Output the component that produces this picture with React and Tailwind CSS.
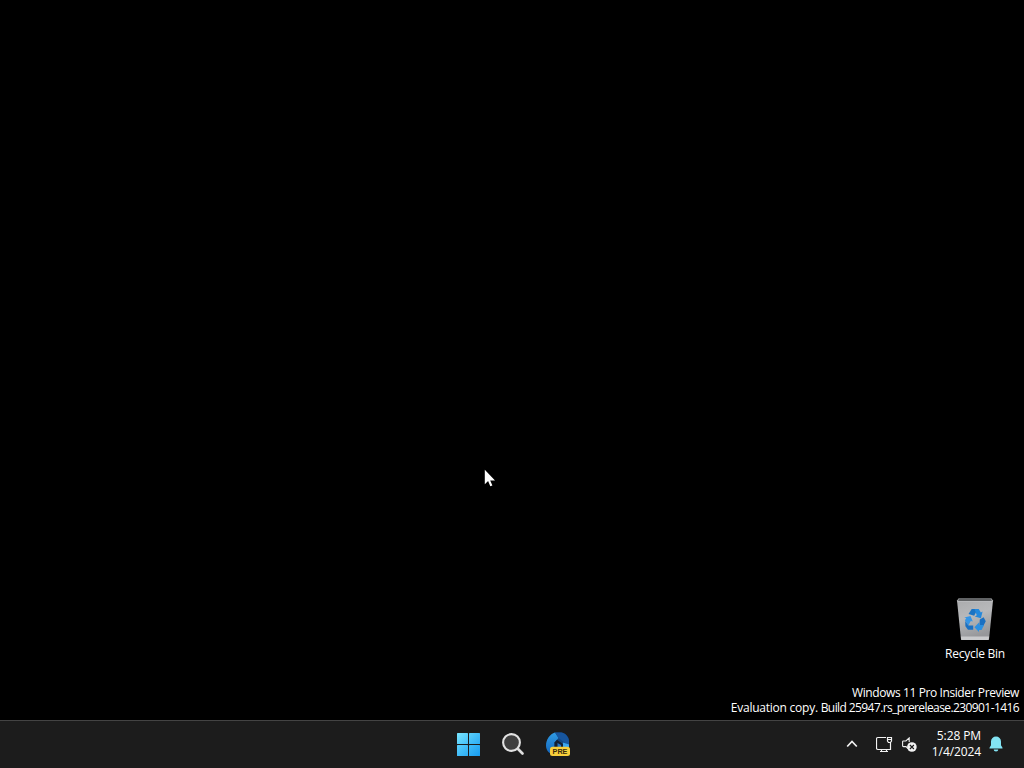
import React from 'react';

const RecycleBinIcon = () => (
  <svg width="38" height="44" viewBox="0 0 38 44">
    <defs>
      <linearGradient id="binBody" x1="0" y1="0" x2="0.3" y2="1">
        <stop offset="0" stopColor="#a9aaac" />
        <stop offset="0.5" stopColor="#b8b9bb" />
        <stop offset="1" stopColor="#96979a" />
      </linearGradient>
    </defs>
    <path d="M1 3.5 3 1h32l2 2.5-4 39H5z" fill="url(#binBody)" />
    <path d="M3.2 1h31.600L36 4.200H2z" fill="#606264" />
    <path d="M1.500 4.500h35" stroke="#c2c3c5" strokeWidth="0.800" />
    <path d="M4.9 39.500h28.200l-.4 3.500H5.2z" fill="#c9cacc" />
    <path d="m12.5 17 3.2-5h6l-3.5 6.8z" fill="#1b74c4" />
    <path d="M18.5 12h4.2l2.2 3.4 1.7-.8-1.7 6.6-6.1-1.8 2-1.2z" fill="#2388dc" />
    <path d="m8.3 20.4 6.2-1.4 2.3 5.6-2-.7-2.5 4.7-3.4-5.3 1.4-2z" fill="#3595e6" />
    <path d="m9.2 24 3.2 4.6h4.8v4.2H12l-2.6-3.6z" fill="#1a70c2" />
    <path d="m23.8 22.4 3.8-2.2 2.2 4-2.8 5.4-3.6-1.8z" fill="#1a70c2" />
    <path d="m18.4 30.2 4.6-4.6v2.3h5l-2.4 5H23v2z" fill="#2b90e2" />
  </svg>
);

const StartIcon = () => (
  <svg width="24" height="24" viewBox="0 0 24 24">
    <defs>
      <linearGradient id="startFill" gradientUnits="userSpaceOnUse" x1="0" y1="0" x2="24" y2="24">
        <stop offset="0" stopColor="#7be8ff" />
        <stop offset="0.5" stopColor="#42bdf8" />
        <stop offset="1" stopColor="#159af0" />
      </linearGradient>
    </defs>
    <g fill="url(#startFill)">
      <rect x="0" y="1" width="11" height="11" rx="0.5" />
      <rect x="12" y="1" width="11" height="11" rx="0.5" />
      <rect x="0" y="13" width="11" height="11" rx="0.5" />
      <rect x="12" y="13" width="11" height="11" rx="0.5" />
    </g>
  </svg>
);

const SearchIcon = () => (
  <svg width="24" height="24" viewBox="0 0 24 24" fill="none">
    <circle cx="10.500" cy="10.500" r="8.400" fill="#3f3f3f" stroke="#e2e2e2" strokeWidth="2.100" />
    <path d="m16.800 16.800 4.700 4.700" stroke="#dedede" strokeWidth="2.700" strokeLinecap="round" />
  </svg>
);

const DevHomeIcon = () => (
  <svg width="26" height="26" viewBox="0 0 26 26">
    <defs>
      <linearGradient id="ringLeft" x1="0" y1="0" x2="0" y2="1">
        <stop offset="0" stopColor="#2f9be4" />
        <stop offset="1" stopColor="#1467bd" />
      </linearGradient>
    </defs>
    <path d="M10 1.500h6.500c5 1 7.500 5 7.500 9V19l-4 4H8l-6-5V9z" fill="#124682" />
    <path d="M10 1.500 13.500 7 9.500 11.500V23H8c-4 0-7-4-7-8.500C1 8.500 5 3 10 1.500z" fill="url(#ringLeft)" />
    <path d="M10 1.500h6.500c4.500 1 7.500 5 7.500 9.500v4L13.500 7z" fill="#17559d" />
    <path d="m18 11.500 6 2V19h-7z" fill="#3aa5ee" />
    <path d="M9.500 11.500 12 8.800 18 13v4H9.500z" fill="#131f31" />
    <path d="m12.500 12 3.500 2v2h-3.500z" fill="#2475c8" />
    <rect x="5" y="15.800" width="20" height="9.200" rx="2.500" fill="#f8cf3b" />
    <text x="15" y="23.100" textAnchor="middle" fontFamily="Liberation Sans, sans-serif" fontWeight="700" fontSize="7.200" fill="#362b0b">PRE</text>
  </svg>
);

const ChevronIcon = () => (
  <svg width="12" height="8" viewBox="0 0 12 8" fill="none">
    <path d="m1.200 6.500 4.800-5 4.800 5" stroke="#f2f2f2" strokeWidth="1.700" />
  </svg>
);

const NetworkIcon = () => (
  <svg width="17" height="17" viewBox="0 0 17 17" fill="none" stroke="#f2f2f2" strokeWidth="1.200">
    <path d="M10 1.500H2q-1.500 0-1.500 1.500v9q0 1.500 1.500 1.500h12.500v-7" />
    <path d="M4 15.500h8M5.500 13.500v2M10.500 13.500v2" />
    <path d="M11.500 1.500h4v3.500l-1 1.500h-2l-1-1.500zM11.500 3.500h4" />
  </svg>
);

const VolumeIcon = () => (
  <svg width="16" height="15" viewBox="0 0 16 15" fill="none">
    <path d="M7.200 5V.9L3.900 4H1.300Q.6 4 .6 4.800v4q0 .8.8.8h2.600l2 2" stroke="#eeeeee" strokeWidth="1.100" />
    <circle cx="9.900" cy="10" r="4.800" fill="#f2f2f2" />
    <path d="m7.900 8 4 4m0-4-4 4" stroke="#1c1c1c" strokeWidth="1.100" />
  </svg>
);

const BellIcon = () => (
  <svg width="14" height="16" viewBox="0 0 14 16" fill="#83e3f3">
    <path d="M7 .5a5 5 0 0 0-5 5v3.700L.5 11.700q-.3.900.6.900h11.800q.9 0 .6-.9L12 9.200V5.500a5 5 0 0 0-5-5z" />
    <path d="M4.700 13.500h4.600a2.300 2 0 0 1-4.600 0z" />
  </svg>
);

const Cursor = () => (
  <svg className="absolute left-[484px] top-[469px]" width="12" height="19" viewBox="0 0 12 19">
    <path d="M.8.800v14.400l3.300-3.100 2.200 5.200 2.100-.9-2.200-5H11z" fill="#fff" />
  </svg>
);

const App = () => {
  return (
    <div className="relative flex h-screen w-full flex-col overflow-hidden bg-black font-['Open_Sans','Noto_Sans',sans-serif] text-[12px] text-white select-none">
      {/* Desktop */}
      <main className="flex flex-1 flex-col items-end justify-end">
        <div className="mr-[11px] flex w-[76px] flex-col items-center">
          <RecycleBinIcon />
          <span className="mt-[5px] leading-4 tracking-[-0.25px] whitespace-nowrap">Recycle Bin</span>
        </div>
        <div className="mt-[23px] mb-[5px] pr-[5px] text-right leading-[15px] whitespace-nowrap">
          <p className="tracking-[-0.4px]">Windows 11 Pro Insider Preview</p>
          <p className="tracking-[-0.59px]">
            <span className="tracking-[-0.24px]">Evaluation copy. </span>
            Build 25947.rs_prerelease.230901-1416
          </p>
        </div>
      </main>

      {/* Taskbar */}
      <footer className="grid h-12 grid-cols-[1fr_auto_1fr] items-center border-t border-[#434343] bg-[#1c1c1c]">
        <div />
        <nav className="mb-px ml-[3px] flex items-center gap-5">
          <StartIcon />
          <SearchIcon />
          <DevHomeIcon />
        </nav>
        <div className="flex items-center justify-end pr-[21px] pb-px">
          <ChevronIcon />
          <div className="ml-[18px] flex items-center gap-[9px]">
            <NetworkIcon />
            <VolumeIcon />
          </div>
          <div className="ml-[14px] text-right leading-4 tracking-[-0.1px] whitespace-nowrap">
            <p>5:28 PM</p>
            <p>1/4/2024</p>
          </div>
          <div className="ml-2">
            <BellIcon />
          </div>
        </div>
      </footer>

      <Cursor />
    </div>
  );
};

export default App;
